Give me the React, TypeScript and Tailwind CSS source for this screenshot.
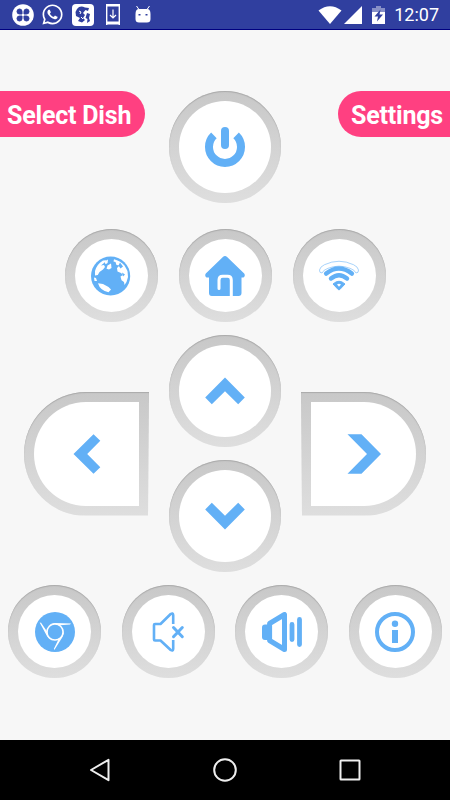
import type { ReactNode } from "react";
import clsx from "clsx";
import { FaWhatsapp } from "react-icons/fa";

const PowerIcon = () => (
  <svg viewBox="0 0 40 40" className="w-10 h-10" fill="none" stroke="currentColor" strokeWidth="8">
    <path d="M20 4v14" strokeLinecap="round" />
    <path d="M8.9 8.4A16 16 0 1 0 31.1 8.4" />
  </svg>
);

const GlobeIcon = () => (
  <svg viewBox="0 0 40 40" className="w-10 h-10" fill="currentColor">
    <circle cx="19.6" cy="20" r="19.6" />
    <g fill="#fff">
      <path d="M4 15Q6 8 12 4.500L15.500 4.300 13 7 10 9.500 13 9 14 11 12 13.500 8.500 16 6.800 19 4 19.500Z" />
      <path d="M13.500 5.500L17 3.500 16.600 7 14.500 8.200Z" />
      <path d="M23 3.200Q29 4.500 33.500 9.500L36.500 15 37 21 35.500 26 33.500 29 33 26 30.500 24.200 29.500 20.500 32 19 30 17 26.500 15.500 26 12 28.500 9.500 25.500 9 24.500 6 22.500 5.500Z" />
      <path d="M16.500 9.500L20 7.600 20.500 12 18 13.500 15.500 12.800Z" />
      <path d="M7 27.200L12 28 17.500 31 20 33.500 17.500 36.200Q9 34.500 7 27.200Z" />
      <path d="M3 21.500L5 22 6 25 3.500 25Z" />
    </g>
    <path d="M29 6.500l3 4-2.500 2-2-3zM31 16.500l3 2-2 2z" />
  </svg>
);

const HomeIcon = () => (
  <svg viewBox="0 0 40 40" className="w-10 h-10">
    <path
      d="M17.900 0.900Q20 -0.900 22.100 0.900L39.200 17.500Q40.700 20 38.500 21.500H36.500V37Q36.500 40 33.500 40H6.800Q4 40 4 37V21.500H1.500Q-0.700 20 0.800 17.500Z"
      fill="currentColor"
    />
    <path
      d="M14 32.500V24Q14 20.300 17.700 20.300H22.600Q26.300 20.300 26.300 24V41"
      fill="none"
      stroke="#fff"
      strokeWidth="3"
      strokeLinecap="round"
    />
  </svg>
);

const SignalIcon = () => (
  <svg viewBox="0 0 40 40" className="w-10 h-10" fill="none" stroke="currentColor">
    <path
      d="M3 17Q.2 17 .5 14Q1 10.800 5.500 8.700Q20 1.800 34.500 8.700Q39 10.800 39.500 14Q39.800 17 37 17Q35.500 13.700 31 12.300Q20 8 9 12.300Q4.500 13.700 3 17Z"
      strokeWidth=".8"
      strokeOpacity=".7"
    />
    <g strokeWidth="4" strokeLinecap="round">
      <path d="M7.200 17.500Q19.800 7.500 32.800 17.500" strokeWidth="4.600" />
      <path d="M12 22.500Q20 16 28 22.500" strokeWidth="4.400" />
    </g>
    <path
      d="M14 28Q20 22.500 26 28L20.800 33.500Q20 34.300 19.200 33.500Z"
      fill="currentColor"
      strokeWidth="1"
      strokeLinejoin="round"
    />
    <path d="M18 28.500Q20 27 22 28.500L20 30.800Z" fill="#fff" stroke="none" />
  </svg>
);

const ChromeIcon = () => (
  <svg viewBox="0 0 40 40" className="w-10 h-10">
    <circle cx="20" cy="20" r="20" fill="currentColor" />
    <circle cx="20" cy="20" r="8" fill="none" stroke="#fff" strokeWidth="1.500" />
    <g fill="#fff">
      <path id="blade" d="M13.500 14Q16 11 20 11L36 11.500 35 12.600 25 13.300 26 14.800Q20 9.600 13.500 14Z" />
      <use href="#blade" transform="rotate(120 20 20)" />
      <use href="#blade" transform="rotate(240 20 20)" />
    </g>
  </svg>
);

const MuteIcon = () => (
  <svg viewBox="0 0 40 40" className="w-10 h-10" fill="none" stroke="currentColor" strokeWidth="2.600" strokeLinecap="round" strokeLinejoin="round">
    <path
      d="M25.200 12V3Q25 .5 22.700 2L12.500 12H7Q6 12 6 13V27.500Q6 28.500 7 28.500H12.500L22.700 38Q25 39.500 25.200 37V28"
      strokeLinecap="butt"
    />
    <path d="M25.500 15.500l8.800 9.200M34.300 15.500l-8.800 9.200" strokeWidth="3" />
  </svg>
);

const VolumeIcon = () => (
  <svg viewBox="0 0 40 40" className="w-10 h-10" fill="none" stroke="currentColor" strokeLinecap="round" strokeLinejoin="round">
    <path d="M7.600 11.500L22.500 2.500V37.500L7.600 28.500Z" strokeWidth="5" />
    <path d="M6 12.500H3Q0 12.500 0 15.500V25Q0 28 3 28H6Z" fill="currentColor" stroke="none" />
    <path d="M30 12.500v15M37.500 7.500v25" strokeWidth="4.800" />
  </svg>
);

const InfoIcon = () => (
  <svg viewBox="0 0 40 40" className="w-10 h-10" fill="currentColor">
    <circle cx="20" cy="20" r="18" fill="none" stroke="currentColor" strokeWidth="4" />
    <circle cx="20" cy="11.700" r="3.200" />
    <path d="M17 18h6v13h-6z" />
  </svg>
);

const arrows = {
  up: "M20 6.500L39.800 26.500 33.200 33.300 20 20.200 6.800 33.300 .2 26.500Z",
  down: "M20 33.500L39.800 13.500 33.200 6.700 20 19.800 6.800 6.700 .2 13.500Z",
  left: "M6.500 20L26.500 .2 33.300 6.800 20.200 20 33.300 33.200 26.500 39.800Z",
  right: "M3.500 .2H17.500L37 20 17.500 39.800H3.500L23 20Z",
};

const Arrow = ({ dir }: { dir: keyof typeof arrows }) => (
  <svg viewBox="0 0 40 40" className="w-10 h-10" fill="currentColor">
    <path d={arrows[dir]} />
  </svg>
);

const shapes = {
  small: { outer: "w-[93px] h-[93px] rounded-full", inner: "rounded-full" },
  large: { outer: "w-28 h-28 rounded-full", inner: "rounded-full" },
  left: {
    outer: "w-[125px] h-[124px] rounded-l-full [clip-path:polygon(0_0,100%_0,99.2%_100%,0_100%)]",
    inner: "rounded-l-full",
  },
  right: {
    outer: "w-[125px] h-[124px] rounded-r-full [clip-path:polygon(0_0,100%_0,100%_100%,0.8%_100%)]",
    inner: "rounded-r-full",
  },
};

interface KeyProps {
  label: string;
  shape?: keyof typeof shapes;
  children: ReactNode;
}

const Key = ({ label, shape = "small", children }: KeyProps) => (
  <button
    aria-label={label}
    className={clsx(
      "shrink-0 p-2.5 bg-linear-to-b from-[#c8c8c8] to-[#dedede] shadow-[inset_0_1px_1px_#aaaaaa]",
      shapes[shape].outer
    )}
  >
    <span
      className={clsx(
        "flex w-full h-full items-center justify-center bg-white text-[#62b0f6]",
        shapes[shape].inner
      )}
    >
      {children}
    </span>
  </button>
);

const StatusBar = () => (
  <header className="flex h-[30px] items-center justify-between bg-[#303f9f] border-b border-[#000080] pl-3 pr-[11px] text-white">
    <div className="flex items-center">
      <svg viewBox="0 0 22 22" className="w-[22px] h-[22px]">
        <circle cx="11" cy="11" r="10.800" fill="#fff" />
        <g fill="#303f9f" stroke="#303f9f">
          <path d="M10 10H7.500A2.500 2.500 0 1 1 10 7.500ZM12 10V7.500A2.500 2.500 0 1 1 14.500 10ZM10 12V14.500A2.500 2.500 0 1 1 7.500 12ZM12 12H14.500A2.500 2.500 0 1 1 12 14.500Z" />
        </g>
      </svg>
      <FaWhatsapp className="ml-[7px] w-[23px] h-[23px]" />
      <svg viewBox="0 0 22 22" className="ml-2 w-[22px] h-[22px]">
        <rect width="22" height="22" rx="4" fill="#fff" />
        <g fill="#303f9f">
          <path d="M5 5Q8 1 13 3.500L17 4 16 7 13.500 6 11 9 13 11 11 14 13 16 10 18.500 6 17 8 14 4 12 3.500 8Z" />
          <path d="M15 9l3 1-1 4 1 3-3 2 .5-4-2-1z" />
        </g>
        <path d="M7 7l2 1-1 2M9 13l2 2" stroke="#fff" fill="none" />
      </svg>
      <svg viewBox="0 0 14 21" className="ml-3 w-3.5 h-[21px]" fill="none" stroke="#fff">
        <path d="M.7 0v21M13.300 0v21" strokeWidth="1.400" />
        <path d="M0 1h14M0 19h14" strokeWidth="3" />
        <path d="M7 5.500v8M4 11l3 3 3-3" strokeWidth="1.200" />
      </svg>
      <svg viewBox="0 0 16 20" className="ml-[15px] w-4 h-5" fill="#fff">
        <path d="M1.500 1L4 4.500H12L14.500 1" fill="none" stroke="#fff" />
        <path d="M.5 9Q.5 4 4 4H12Q15.500 4 15.500 9V14Q15.500 17.500 12 17.500H4Q.5 17.500 .5 14Z" />
        <path d="M3.500 9h2v1.500h-2zM10.500 9h2v1.500h-2z" fill="#303f9f" />
      </svg>
    </div>
    <div className="flex items-center">
      <svg viewBox="0 0 24 18" className="w-6 h-[18px]" fill="#fff">
        <path d="M.5 4.500Q12 -4 23.500 4.500L12 18Z" />
      </svg>
      <svg viewBox="0 0 18 18" className="ml-0.5 w-[18px] h-[18px]" fill="#fff">
        <path d="M18 0V18H0Z" />
      </svg>
      <svg viewBox="0 0 13 18" className="ml-2.5 w-[13px] h-[18px]">
        <path d="M4 0h5v2h4v4H0V2h4z" fill="#8790c7" />
        <path d="M0 6h13v12H0z" fill="#fff" />
        <path d="M8.500 3.500L2.500 10.500H6L5 15.500 11 8.500H7.500Z" fill="#303f9f" />
      </svg>
      <span className="ml-[9px] text-[18px] leading-none">12:07</span>
    </div>
  </header>
);

const NavBar = () => (
  <nav className="flex h-[60px] items-center justify-between bg-black px-[88px]">
    <svg viewBox="0 0 24 24" className="w-6 h-6" fill="none" stroke="#eee" strokeWidth="2">
      <path d="M20.500 1.800V22.200L3 12Z" strokeLinejoin="round" />
    </svg>
    <svg viewBox="0 0 24 24" className="w-6 h-6" fill="none" stroke="#eee" strokeWidth="2">
      <circle cx="12" cy="12" r="10.800" />
    </svg>
    <svg viewBox="0 0 24 24" className="w-6 h-6" fill="none" stroke="#eee" strokeWidth="2">
      <rect x="2.500" y="2.500" width="19" height="19" rx=".5" />
    </svg>
  </nav>
);

const App = () => {
  return (
    <div className="flex h-[800px] w-[450px] flex-col overflow-hidden bg-[#f7f7f7] font-['Roboto',sans-serif]">
      <StatusBar />

      <main className="flex flex-1 flex-col pt-[61px]">
        {/* Top row */}
        <div className="grid grid-cols-[1fr_112px_1fr] items-start">
          <button className="h-[46px] w-[145px] justify-self-start rounded-r-full bg-[#ff4081] pl-[7px] pt-0.5 text-left text-[25px] font-bold leading-none tracking-[-0.2px] text-white whitespace-nowrap">
            Select Dish
          </button>
          <Key label="Power" shape="large">
            <PowerIcon />
          </Key>
          <button className="h-[46px] w-28 justify-self-end rounded-l-full bg-[#ff4081] pr-[7px] pt-0.5 text-right text-[25px] font-bold leading-none tracking-[-0.2px] text-white whitespace-nowrap">
            Settings
          </button>
        </div>

        <div className="mt-[26px] flex justify-between px-[64.5px]">
          <Key label="Web">
            <GlobeIcon />
          </Key>
          <Key label="Home">
            <HomeIcon />
          </Key>
          <Key label="Signal">
            <SignalIcon />
          </Key>
        </div>

        {/* Direction pad */}
        <div className="mt-[13px] flex items-center justify-between px-6">
          <Key label="Left" shape="left">
            <Arrow dir="left" />
          </Key>
          <div className="flex flex-col gap-[13px]">
            <Key label="Up" shape="large">
              <Arrow dir="up" />
            </Key>
            <Key label="Down" shape="large">
              <Arrow dir="down" />
            </Key>
          </div>
          <Key label="Right" shape="right">
            <Arrow dir="right" />
          </Key>
        </div>

        <div className="mt-[13px] flex justify-between px-2">
          <Key label="Browser">
            <ChromeIcon />
          </Key>
          <Key label="Mute">
            <MuteIcon />
          </Key>
          <Key label="Volume">
            <VolumeIcon />
          </Key>
          <Key label="Info">
            <InfoIcon />
          </Key>
        </div>
      </main>

      <NavBar />
    </div>
  );
};

export default App;
